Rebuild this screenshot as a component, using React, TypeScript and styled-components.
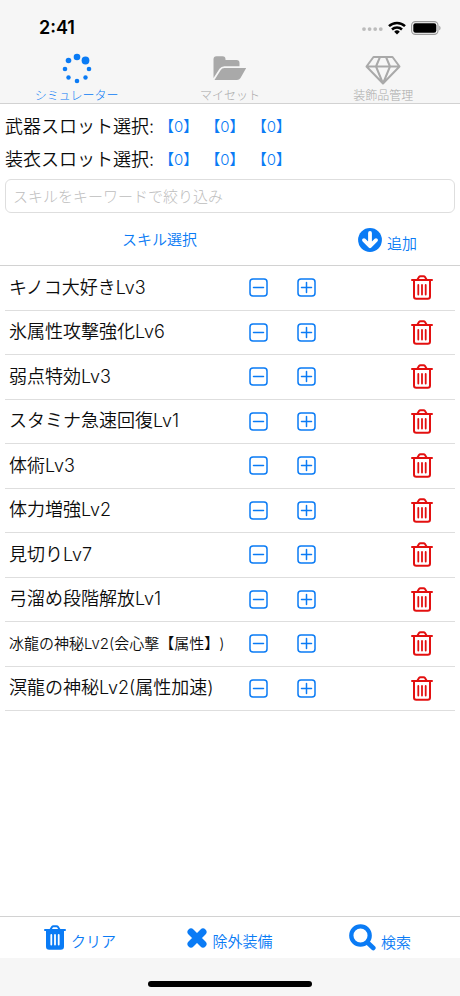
import React from "react";
import styled, { createGlobalStyle } from "styled-components";

const blue = "#0a7bf5";
const red = "#e31010";
const grey = "#a9a9a9";

const GlobalStyle = createGlobalStyle`
  *, *::before, *::after { box-sizing: border-box; }
  body {
    margin: 0;
    background: #ffffff;
    color: #0c0c0c;
    font-family: Inter, "Noto Sans CJK JP", sans-serif;
    font-weight: 350;
    text-spacing-trim: space-all;
  }
  svg { display: block; flex: none; }
`;

const Page = styled.div`
  min-height: 100vh;
  display: flex;
  flex-direction: column;
`;

const Header = styled.header`
  background: #f6f6f6;
  border-bottom: 1px solid #d2d2d2;
`;

const StatusBar = styled.div`
  display: flex;
  align-items: center;
  justify-content: space-between;
  height: 52px;
  padding: 4px 18px 0 39px;
`;

const Clock = styled.time`
  font-size: 18px;
  line-height: 24px;
  font-weight: 600;
  color: #000000;
`;

const StatusIcons = styled.div`
  display: flex;
  align-items: center;
  gap: 5px;
`;

const Tabs = styled.nav`
  display: grid;
  grid-template-columns: repeat(3, 1fr);
`;

const Tab = styled.button<{ $active?: boolean }>`
  display: flex;
  flex-direction: column;
  align-items: center;
  gap: 4px;
  padding: 1px 0 0;
  border: 0;
  background: none;
  color: ${(p) => (p.$active ? blue : grey)};
  font: inherit;
  font-size: 12px;
  font-weight: 300;
  line-height: 14px;
`;

const Main = styled.main`
  flex: 1;
`;

const Slots = styled.div`
  padding: 6px 5px 3px;
`;

const SlotRow = styled.div`
  display: flex;
  align-items: center;
  gap: 5px;
  height: 33px;
  font-size: 18px;
  line-height: 24px;
`;

const SlotGroup = styled.div`
  display: flex;
  gap: 7px;
`;

const SlotButton = styled.button`
  padding: 0;
  border: 0;
  background: none;
  color: ${blue};
  font: inherit;
  font-size: 15px;
`;

const SearchBox = styled.div`
  display: flex;
  padding: 0 5px;
`;

const SearchInput = styled.input`
  flex: 1;
  min-width: 0;
  height: 34px;
  padding: 0 7px;
  border: 1px solid #dedede;
  border-radius: 6px;
  background: #ffffff;
  font: inherit;
  font-size: 15px;
  font-weight: 300;
  &::placeholder { color: #bdbdbd; opacity: 1; }
`;

const SkillBar = styled.div`
  display: grid;
  grid-template-columns: 7fr 3fr;
  align-items: center;
  justify-items: center;
  height: 53px;
  padding: 2px 4px 0 0;
  border-bottom: 1px solid #d2d2d2;
`;

const TextButton = styled.button`
  display: flex;
  align-items: flex-end;
  gap: 5px;
  padding: 0;
  border: 0;
  background: none;
  color: ${blue};
  font: inherit;
  font-size: 15px;
  line-height: 16px;
`;

const SkillList = styled.ul`
  display: grid;
  grid-auto-rows: 1fr;
  min-height: 445px;
  margin: 0 5px;
  padding: 0;
  list-style: none;
`;

const SkillRow = styled.li`
  display: grid;
  grid-template-columns: 1fr 48px 48px 125px;
  align-items: center;
  border-bottom: 1px solid #dedede;
`;

const SkillName = styled.span<{ $compact?: boolean }>`
  padding-left: 4px;
  font-size: ${(p) => (p.$compact ? 15 : 18)}px;
  line-height: 24px;
  white-space: nowrap;
`;

const IconButton = styled.button<{ $danger?: boolean }>`
  display: flex;
  justify-content: center;
  justify-self: ${(p) => (p.$danger ? "end" : "center")};
  margin-right: ${(p) => (p.$danger ? 22 : 0)}px;
  padding: 0;
  border: 0;
  background: none;
  color: ${(p) => (p.$danger ? red : blue)};
`;

const ActionBar = styled.footer`
  display: grid;
  grid-template-columns: repeat(3, 1fr);
  align-items: center;
  justify-items: center;
  height: 42px;
  padding: 0 5px;
  border-top: 1px solid #d2d2d2;
`;

const HomeArea = styled.div`
  display: flex;
  justify-content: center;
  align-items: flex-end;
  height: 38px;
  padding-bottom: 9px;
  background: #f6f6f6;
`;

const HomeIndicator = styled.div`
  width: 164px;
  height: 6px;
  border-radius: 3px;
  background: #000000;
`;

const Signal = () => (
  <svg width="21" height="5" viewBox="0 -1 21 5" fill="#bcbcbc">
    {[2, 7.6, 13.2, 18.8].map((x) => (
      <circle key={x} cx={x} cy="2.1" r="1.9" />
    ))}
  </svg>
);

const Wifi = () => (
  <svg width="18" height="14" viewBox="0 0 18 14" fill="none" stroke="#000" strokeWidth="2.5">
    <path d="M1 5.2a11.4 11.4 0 0 1 16 0" />
    <path d="M4 8.5a7.2 7.2 0 0 1 10 0" />
    <path d="M9 13.4 6.2 10.7a4 4 0 0 1 5.6 0z" fill="#000" stroke="none" />
  </svg>
);

const Battery = () => (
  <svg width="31" height="14" viewBox="0 0 31 14">
    <rect x="0.6" y="0.6" width="26.4" height="12.8" rx="3.8" fill="none" stroke="#9b9b9b" strokeWidth="1.1" />
    <rect x="2.3" y="2.3" width="23" height="9.4" rx="2.2" fill="#000" />
    <path d="M28.3 4.7c1.6.6 1.6 4 0 4.6z" fill="#9b9b9b" />
  </svg>
);

const dots: [number, number, number][] = [
  [17, 5, 3.3], [25.5, 8.5, 3.9], [29, 17, 2.3], [25.5, 25.5, 2.2],
  [17, 29, 2.3], [8.5, 25.5, 2.2], [5, 17, 2.3], [8.5, 8.5, 2.8],
];

const Spinner = () => (
  <svg width="34" height="32" viewBox="0 1 34 32" fill={blue}>
    {dots.map(([x, y, r]) => (
      <circle key={`${x}-${y}`} cx={x} cy={y} r={r} />
    ))}
  </svg>
);

const Folder = () => (
  <svg width="34" height="32" viewBox="0 0 34 32" fill="currentColor">
    <path d="M.5 25V6.2a3 3 0 0 1 3-3H9.5a3 3 0 0 1 3 3V7H23.5a3 3 0 0 1 3 3v3.2H11.5a6 6 0 0 0-5 2.600z" />
    <path d="M1.5 27 7.6 17.2A4.5 4.5 0 0 1 11.5 15H33.2L27.5 25A4.5 4.5 0 0 1 24 27z" />
  </svg>
);

const Diamond = () => (
  <svg width="36" height="32" viewBox="0 0 36 32" fill="none" stroke="currentColor" strokeWidth="2" strokeLinejoin="round">
    <path d="M8.5 4h19L34.5 13.5 18 30.5 1.5 13.5zM1.5 13.5h33M15 4l-4 9.5L18 30.5l7-17L21 4" />
  </svg>
);

const ArrowDown = () => (
  <svg width="24" height="24" viewBox="0 0 24 24">
    <circle cx="12" cy="12" r="11.9" fill={blue} />
    <path d="M12 5v11M6 12.2l6 6 6-6" fill="none" stroke="#fff" strokeWidth="3.8" strokeLinecap="round" strokeLinejoin="round" />
  </svg>
);

const Stepper = ({ plus }: { plus?: boolean }) => (
  <svg width="19" height="19" viewBox="0 0 19 19" fill="none" stroke="currentColor" strokeWidth="1.5" strokeLinecap="round">
    <rect x="1" y="1" width="17" height="17" rx="3" />
    <path d={plus ? "M4.5 9.5h10M9.5 4.5v10" : "M4.5 9.5h10"} />
  </svg>
);

const Trash = ({ solid }: { solid?: boolean }) => (
  <svg width="22" height="25" viewBox="0 0 22 25" fill="none" stroke="currentColor" strokeWidth="2" strokeLinecap="round" strokeLinejoin="round">
    <path d="M1 5h20M6.5 4.5 8 2q.5-.8 1.5-.8h3q1 0 1.5.8l1.5 2.5" />
    <path d="M3 5.5V21.5Q3 23.8 5.2 23.8H16.8Q19 23.8 19 21.5V5.5" fill={solid ? "currentColor" : "none"} />
    <path d="M7.3 10v9.5M11 10v9.5M14.7 10v9.5" stroke={solid ? "#fff" : "currentColor"} strokeWidth="1.8" />
  </svg>
);

const Cross = () => (
  <svg width="20" height="24" viewBox="0 0 20 24" fill="none" stroke="currentColor" strokeWidth="7" strokeLinecap="round">
    <path d="M4 6l12 12M16 6 4 18" />
  </svg>
);

const Magnifier = () => (
  <svg width="27" height="27" viewBox="0 0 27 27" fill="none" stroke="currentColor" strokeLinecap="round">
    <circle cx="11.5" cy="11.5" r="9.2" strokeWidth="4.3" />
    <path d="M18.5 18.5l5.8 5.5" strokeWidth="4.6" />
  </svg>
);

const skills: { name: string; compact?: boolean }[] = [
  { name: "キノコ大好きLv3" },
  { name: "氷属性攻撃強化Lv6" },
  { name: "弱点特効Lv3" },
  { name: "スタミナ急速回復Lv1" },
  { name: "体術Lv3" },
  { name: "体力増強Lv2" },
  { name: "見切りLv7" },
  { name: "弓溜め段階解放Lv1" },
  { name: "冰龍の神秘Lv2(会心撃【属性】)", compact: true },
  { name: "溟龍の神秘Lv2(属性加速)" },
];

export default function App() {
  return (
    <Page lang="ja">
      <GlobalStyle />
      <Header>
        <StatusBar>
          <Clock>2:41</Clock>
          <StatusIcons>
            <Signal />
            <Wifi />
            <Battery />
          </StatusIcons>
        </StatusBar>
        <Tabs>
          <Tab type="button" $active aria-current="page"><Spinner />シミュレーター</Tab>
          <Tab type="button"><Folder />マイセット</Tab>
          <Tab type="button"><Diamond />装飾品管理</Tab>
        </Tabs>
      </Header>
      <Main>
        <Slots>
          {["武器スロット選択:", "装衣スロット選択:"].map((label) => (
            <SlotRow key={label}>
              <span>{label}</span>
              <SlotGroup role="group" aria-label={label}>
                {[0, 1, 2].map((n) => (
                  <SlotButton key={n} type="button">【0】</SlotButton>
                ))}
              </SlotGroup>
            </SlotRow>
          ))}
        </Slots>
        <SearchBox>
          <SearchInput type="text" aria-label="スキル" placeholder="スキルをキーワードで絞り込み" />
        </SearchBox>
        <SkillBar>
          <TextButton type="button">スキル選択</TextButton>
          <TextButton type="button"><ArrowDown />追加</TextButton>
        </SkillBar>
        <SkillList>
          {skills.map((s) => (
            <SkillRow key={s.name}>
              <SkillName $compact={s.compact}>{s.name}</SkillName>
              <IconButton type="button" aria-label="−"><Stepper /></IconButton>
              <IconButton type="button" aria-label="+"><Stepper plus /></IconButton>
              <IconButton type="button" $danger aria-label="削除"><Trash /></IconButton>
            </SkillRow>
          ))}
        </SkillList>
      </Main>
      <ActionBar>
        <TextButton type="button"><Trash solid />クリア</TextButton>
        <TextButton type="button"><Cross />除外装備</TextButton>
        <TextButton type="button"><Magnifier />検索</TextButton>
      </ActionBar>
      <HomeArea><HomeIndicator /></HomeArea>
    </Page>
  );
}
